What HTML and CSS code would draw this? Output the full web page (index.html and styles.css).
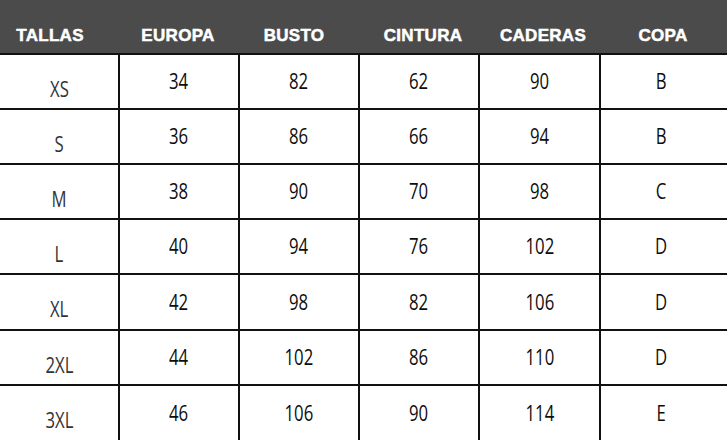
FILE: index.html
```html
<!DOCTYPE html>
<html lang="es">
<head>
<meta charset="utf-8">
<title>Tabla de tallas</title>
<link rel="stylesheet" href="styles.css">
</head>
<body>
<div class="chart">
  <div class="head"><span class="h h-tallas">TALLAS</span></div>
  <div class="head"><span class="h h-europa">EUROPA</span></div>
  <div class="head"><span class="h h-busto">BUSTO</span></div>
  <div class="head"><span class="h h-cintura">CINTURA</span></div>
  <div class="head"><span class="h h-caderas">CADERAS</span></div>
  <div class="head"><span class="h h-copa">COPA</span></div>

  <div class="cell size"><span class="v">XS</span></div>
  <div class="cell"><span class="v">34</span></div>
  <div class="cell"><span class="v">82</span></div>
  <div class="cell"><span class="v">62</span></div>
  <div class="cell"><span class="v">90</span></div>
  <div class="cell copa"><span class="v">B</span></div>

  <div class="cell size"><span class="v">S</span></div>
  <div class="cell"><span class="v">36</span></div>
  <div class="cell"><span class="v">86</span></div>
  <div class="cell"><span class="v">66</span></div>
  <div class="cell"><span class="v">94</span></div>
  <div class="cell copa"><span class="v">B</span></div>

  <div class="cell size"><span class="v">M</span></div>
  <div class="cell"><span class="v">38</span></div>
  <div class="cell"><span class="v">90</span></div>
  <div class="cell"><span class="v">70</span></div>
  <div class="cell"><span class="v">98</span></div>
  <div class="cell copa"><span class="v">C</span></div>

  <div class="cell size"><span class="v">L</span></div>
  <div class="cell"><span class="v">40</span></div>
  <div class="cell"><span class="v">94</span></div>
  <div class="cell"><span class="v">76</span></div>
  <div class="cell"><span class="v">102</span></div>
  <div class="cell copa"><span class="v">D</span></div>

  <div class="cell size"><span class="v">XL</span></div>
  <div class="cell"><span class="v">42</span></div>
  <div class="cell"><span class="v">98</span></div>
  <div class="cell"><span class="v">82</span></div>
  <div class="cell"><span class="v">106</span></div>
  <div class="cell copa"><span class="v">D</span></div>

  <div class="cell size"><span class="v">2XL</span></div>
  <div class="cell"><span class="v">44</span></div>
  <div class="cell"><span class="v">102</span></div>
  <div class="cell"><span class="v">86</span></div>
  <div class="cell"><span class="v">110</span></div>
  <div class="cell copa"><span class="v">D</span></div>

  <div class="cell size"><span class="v">3XL</span></div>
  <div class="cell"><span class="v">46</span></div>
  <div class="cell"><span class="v">106</span></div>
  <div class="cell"><span class="v">90</span></div>
  <div class="cell"><span class="v">114</span></div>
  <div class="cell copa"><span class="v">E</span></div>
</div>
</body>
</html>
```

FILE: styles.css
```css
html, body {
  margin: 0;
  padding: 0;
  background: #ffffff;
}

.chart {
  width: 727px;
  height: 440px;
  overflow: hidden;
  display: grid;
  grid-template-columns: 118px 120px 120px 120px 121px 128px;
  grid-template-rows: 53px 55px 55px 55px 55px 56px 55px 56px;
}

.head {
  background: #4b4b4b;
  display: flex;
  justify-content: center;
  align-items: flex-start;
  padding-top: 27px;
  box-sizing: border-box;
}

.h {
  font-family: "Liberation Sans", Arial, sans-serif;
  font-weight: bold;
  font-size: 17px;
  line-height: 17px;
  color: #ffffff;
  letter-spacing: 0.3px;
  -webkit-text-stroke: 0.5px #ffffff;
}

.h-tallas { margin-right: 18px; }
.h-busto { margin-right: 8px; }
.h-cintura { margin-left: 10px; }
.h-caderas { margin-left: 9px; }

.cell {
  border-top: 2px solid #111111;
  border-left: 2px solid #111111;
  box-sizing: border-box;
  display: flex;
  justify-content: center;
  align-items: center;
  padding-bottom: 3px;
}

.cell.size {
  border-left: none;
  padding-top: 12px;
  padding-bottom: 0;
}

.cell.copa {
  padding-right: 6px;
}

.v {
  display: inline-block;
  font-family: "Open Sans", "Liberation Sans", sans-serif;
  font-weight: 500;
  font-size: 22px;
  line-height: 22px;
  color: #0d0d0d;
  transform: scaleX(0.76);
}

.size .v {
  color: #333333;
}
```
